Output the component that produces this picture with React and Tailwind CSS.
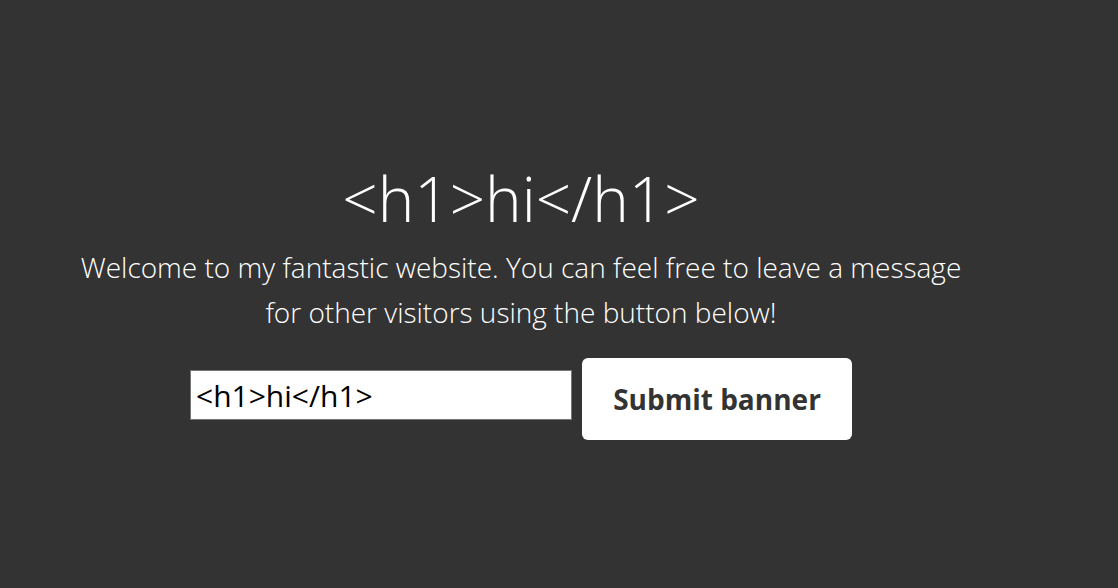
import React, { useState } from 'react'

const App = () => {
    const [banner, setBanner] = useState('<h1>hi</h1>')

    return (
        <div className="min-h-[588px] w-full bg-[#333333] text-white font-['Open_Sans','Noto_Sans',sans-serif]">
            <div className="w-[1042px] flex flex-col items-center text-center pt-[162px]">
                {/* banner output */}
                <div className="text-[62px] leading-[72px] font-light">{banner}</div>

                <p className="w-[900px] text-[28px] leading-[45px] font-light mt-[11px]">
                    Welcome to my fantastic website. You can feel free to leave a message for other visitors using the button below!
                </p>

                <div className="flex items-start gap-[10px] mt-[23px]">
                    <input
                        type="text"
                        value={banner}
                        onChange={(e) => setBanner(e.target.value)}
                        className="w-[382px] h-[50px] mt-[12px] bg-white text-black border border-[#767676] px-[5px] text-[30px] font-['Open_Sans',sans-serif] outline-none"
                    />
                    <button className="w-[270px] h-[82px] bg-white text-[#333333] rounded-[6px] text-[28px] font-bold">
                        Submit banner
                    </button>
                </div>
            </div>
        </div>
    )
}

export default App
